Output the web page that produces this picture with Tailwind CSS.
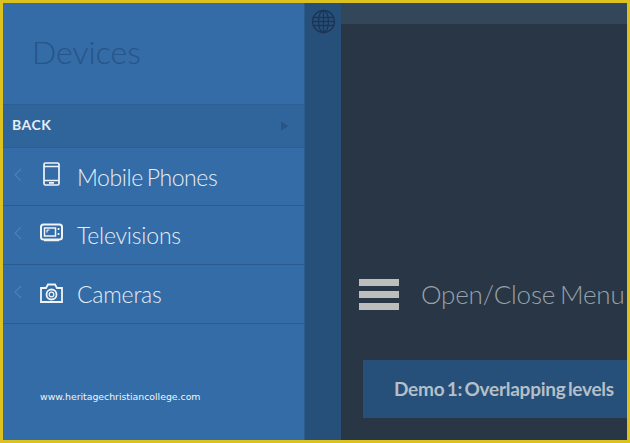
<!DOCTYPE html>
<html lang="en">
<head>
    <meta charset="UTF-8">
    <title>Devices</title>
    <script src="https://cdn.jsdelivr.net/npm/@tailwindcss/browser@4"></script>
</head>
<body class="w-[630px] h-[443px] overflow-hidden font-['Lato',sans-serif]">
    <div class="flex h-full border-[3px] border-[#dcc220] bg-[#293645]">
        <!-- menu panel -->
        <div class="w-[302px] shrink-0 flex flex-col bg-[#336ca6] border-r border-[#2a5c8e]">
            <h2 class="h-[101px] pl-[29px] pt-[29px] text-[32px] leading-[40px] font-light text-[#285486]">Devices</h2>
            <div class="h-[44px] flex items-center justify-between pl-[9px] pr-[15px] bg-[#30659c] border-y border-[#2d5f92]">
                <span class="text-[14px] leading-[20px] mb-[3px] font-bold tracking-[0.5px] text-[#e6edf5]">BACK</span>
                <svg class="w-[9px] h-[10px] mb-[1px]" viewBox="0 0 9 10"><path d="M1 0.5L8.5 5L1 9.5Z" fill="#285486"/></svg>
            </div>
            <div class="h-[58px] flex items-center border-b border-[#2a5c8e] text-[23px] font-light text-[#e6edf5]">
                <svg class="w-[8px] h-[14px] ml-[11px] mb-[3px] shrink-0" viewBox="0 0 8 14" fill="none" stroke="#4a80b5" stroke-width="1.3"><path d="M7 1L1 7L7 13"/></svg>
                <svg class="w-[17px] h-[24px] ml-[21px] mb-[5px] shrink-0" viewBox="0 0 17 24" fill="none" stroke="#f0f4f8" stroke-width="1.7"><rect x="1" y="1" width="15" height="22" rx="1.500"/><path d="M1 4.500H16M1 18.500H16M6 20.800H11"/></svg>
                <span class="ml-[17px] mt-[1px] tracking-[-0.4px] [word-spacing:-2px]">Mobile Phones</span>
            </div>
            <div class="h-[59px] flex items-center border-b border-[#2a5c8e] text-[23px] font-light text-[#e6edf5]">
                <svg class="w-[8px] h-[14px] ml-[11px] mb-[5px] shrink-0" viewBox="0 0 8 14" fill="none" stroke="#4a80b5" stroke-width="1.3"><path d="M7 1L1 7L7 13"/></svg>
                <svg class="w-[23px] h-[19px] ml-[18px] mb-[5px] shrink-0" viewBox="0 0 23 19" fill="none" stroke="#f0f4f8" stroke-width="2"><path d="M3.500 1.500H19.500C21 1.500 22 2.500 22 4V14C22 15.500 21 16.500 19.500 16.500H3.500C2 16.500 1 15.500 1 14V4C1 2.500 2 1.500 3.500 1.500Z"/><path d="M4.500 5H15.500V13H4.500Z" stroke-width="1.500"/><path d="M18.500 5V7M18.500 10V12M4 17.500H19" stroke-width="1.700"/><path d="M7 7L9.500 7M7 7V9.500" stroke-width="1.200"/></svg>
                <span class="ml-[14px] tracking-[-0.2px]">Televisions</span>
            </div>
            <div class="h-[59px] flex items-center border-b border-[#2a5c8e] text-[23px] font-light text-[#e6edf5]">
                <svg class="w-[8px] h-[14px] ml-[11px] mb-[5px] shrink-0" viewBox="0 0 8 14" fill="none" stroke="#4a80b5" stroke-width="1.3"><path d="M7 1L1 7L7 13"/></svg>
                <svg class="w-[23px] h-[20px] ml-[18px] mb-[3px] shrink-0" viewBox="0 0 23 20" fill="none" stroke="#f0f4f8" stroke-width="1.800"><path d="M1 5H6L8 1.500H15L17 5H22V19H1Z"/><circle cx="11.500" cy="11.500" r="5"/><circle cx="11.500" cy="11.500" r="2.300" stroke-width="1.200"/></svg>
                <span class="ml-[14px] tracking-[-0.2px]">Cameras</span>
            </div>
            <p class="mt-[66px] ml-[37px] font-['DejaVu_Sans',sans-serif] text-[9.400px] tracking-[-0.03px] leading-[14px] text-[#f0f4f8]">www.heritagechristiancollege.com</p>
        </div>
        <!-- second level strip -->
        <div class="w-[36px] shrink-0 bg-[#265079] flex justify-center pt-[6px]">
            <svg class="w-[25px] h-[25px]" viewBox="0 0 25 25" fill="none" stroke="#1c3557" stroke-width="1.300"><circle cx="12.500" cy="12.500" r="11"/><ellipse cx="12.500" cy="12.500" rx="5" ry="11"/><path d="M12.500 1.500V23.500M2 8.500H23M1.500 12.500H23.500M2 16.500H23"/></svg>
        </div>
        <!-- main -->
        <div class="flex-1 min-w-0 flex flex-col overflow-hidden">
            <div class="h-[21px] bg-[#33475b] shrink-0"></div>
            <div class="flex items-center h-[40px] mt-[251px] pl-[18px] whitespace-nowrap">
                <div class="w-[40px] flex flex-col gap-[5px] mb-[1px] shrink-0">
                    <div class="h-[7px] bg-[#bdbdbd]"></div>
                    <div class="h-[7px] bg-[#bdbdbd]"></div>
                    <div class="h-[7px] bg-[#bdbdbd]"></div>
                </div>
                <span class="ml-[22px] mb-[2px] text-[26px] font-light tracking-[-0.2px] [word-spacing:-2px] text-[#98a1a9]">Open/Close Menu</span>
            </div>
            <div class="mt-[45px] ml-[22px] h-[58px] flex items-center pl-[31px] bg-[#265079] whitespace-nowrap">
                <span class="text-[19px] font-bold tracking-[-0.25px] [word-spacing:-2px] text-[#b4bfc8]">Demo 1: Overlapping levels</span>
            </div>
        </div>
    </div>
</body>
</html>
